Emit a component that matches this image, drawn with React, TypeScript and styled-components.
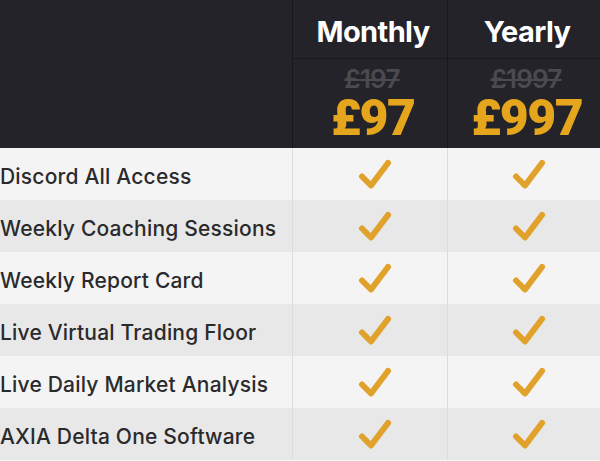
import { Fragment } from 'react';
import styled, { createGlobalStyle } from 'styled-components';

const GlobalStyle = createGlobalStyle`
  html, body {
    margin: 0;
    padding: 0;
    background: #f4f4f4;
  }
  body {
    font-family: Inter, "Open Sans", sans-serif;
  }
`;

const Table = styled.div`
  width: 600px;
  height: 461px;
  display: grid;
  grid-template-columns: 293px 155px 152px;
  grid-template-rows: 59px 89px repeat(6, 52px) 1fr;
  overflow: hidden;
`;

const HeadBlank = styled.div`
  grid-row: 1 / span 2;
  background: #242329;
  border-right: 1px solid #19181d;
`;

const PlanCell = styled.div<{ $last?: boolean }>`
  background: #242329;
  border-bottom: 1px solid #19181d;
  border-right: ${(p) => (p.$last ? 'none' : '1px solid #19181d')};
  display: flex;
  align-items: center;
  justify-content: center;
  padding: 4px 0 0 6px;
  color: #ffffff;
  font-size: 29px;
  font-weight: 700;
  letter-spacing: -0.6px;
`;

const PriceCell = styled.div<{ $last?: boolean }>`
  background: #242329;
  border-right: ${(p) => (p.$last ? 'none' : '1px solid #19181d')};
  display: flex;
  flex-direction: column;
  align-items: center;
  justify-content: flex-start;
  gap: 2px;
  padding-left: 4px;
  padding-top: 7px;
`;

const OldPrice = styled.span`
  color: #4b4a50;
  font-size: 26px;
  font-weight: 600;
  line-height: 26px;
  letter-spacing: -0.8px;
  text-decoration: line-through;
  text-decoration-thickness: 2px;
`;

const NewPrice = styled.span`
  color: #e5a51d;
  font-family: Roboto, Inter, sans-serif;
  font-size: 50px;
  font-weight: 900;
  line-height: 48px;
  letter-spacing: -1.5px;
  margin-right: -1.5px;
`;

const Label = styled.div<{ $alt: boolean }>`
  background: ${(p) => (p.$alt ? '#e8e8e8' : '#f4f4f4')};
  border-right: 1px solid #dcdcdc;
  display: flex;
  align-items: center;
  padding-top: 4px;
  color: #2a2a2c;
  font-size: 21px;
  font-weight: 500;
  letter-spacing: 0.2px;
  white-space: nowrap;
`;

const CheckCell = styled.div<{ $alt: boolean; $last?: boolean }>`
  background: ${(p) => (p.$alt ? '#e8e8e8' : '#f4f4f4')};
  border-right: ${(p) => (p.$last ? 'none' : '1px solid #dcdcdc')};
  display: flex;
  align-items: center;
  justify-content: center;
  padding-left: 10px;
`;

const Filler = styled.div`
  grid-column: 1 / span 3;
  background: #f4f4f4;
`;

const Check = () => (
  <svg width="34" height="31" viewBox="0 0 34 31">
    <path
      d="M4 17.5 L13 26.5 L30 4"
      fill="none"
      stroke="#e0a22b"
      strokeWidth="6"
      strokeLinecap="round"
      strokeLinejoin="round"
    />
  </svg>
);

const features = [
  'Discord All Access',
  'Weekly Coaching Sessions',
  'Weekly Report Card',
  'Live Virtual Trading Floor',
  'Live Daily Market Analysis',
  'AXIA Delta One Software',
];

export default function App() {
  return (
    <>
      <GlobalStyle />
      <Table>
        <HeadBlank />
        <PlanCell>Monthly</PlanCell>
        <PlanCell $last>Yearly</PlanCell>
        <PriceCell>
          <OldPrice>£197</OldPrice>
          <NewPrice>£97</NewPrice>
        </PriceCell>
        <PriceCell $last>
          <OldPrice>£1997</OldPrice>
          <NewPrice>£997</NewPrice>
        </PriceCell>
        {features.map((f, i) => (
          <Fragment key={f}>
            <Label $alt={i % 2 === 1}>{f}</Label>
            <CheckCell $alt={i % 2 === 1}>
              <Check />
            </CheckCell>
            <CheckCell $alt={i % 2 === 1} $last>
              <Check />
            </CheckCell>
          </Fragment>
        ))}
        <Filler />
      </Table>
    </>
  );
}
